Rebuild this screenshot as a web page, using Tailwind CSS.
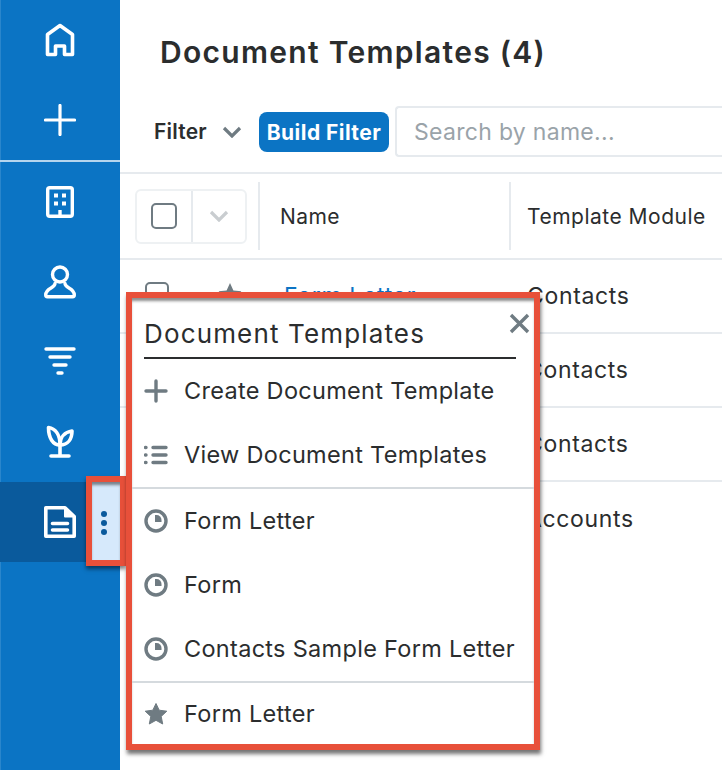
<!DOCTYPE html>
<html>
<head>
<meta charset="utf-8">
<script src="https://cdn.jsdelivr.net/npm/@tailwindcss/browser@4"></script>
</head>
<body class="bg-white">
<div class="relative flex w-[722px] h-[770px] overflow-hidden font-['Inter',sans-serif] text-[#2b2d2e]">
  <!-- Sidebar -->
  <nav class="w-[120px] h-full shrink-0 bg-[#0b74c4] border-l border-[#2a86cc] flex flex-col text-white">
    <div class="h-[80px] flex items-center justify-center -ml-px">
      <svg width="30" height="34" viewBox="0 0 30 34" fill="none" stroke="white" stroke-width="3.6" stroke-linejoin="round"><path d="M15 2.5 L27.5 11.5 V31.5 H19.5 V23 H10.5 V31.5 H2.5 V11.5 Z"/></svg>
    </div>
    <div class="h-[80px] flex items-center justify-center -ml-px">
      <svg width="32" height="32" viewBox="0 0 32 32" fill="none" stroke="white" stroke-width="3.2" stroke-linecap="round"><path d="M16 1.5 V30.5 M1.5 16 H30.5"/></svg>
    </div>
    <div class="h-[2px] bg-[#b5d5ee] -ml-px"></div>
    <div class="h-[80px] flex items-center justify-center -ml-px">
      <svg width="28" height="32" viewBox="0 0 28 32" fill="none" stroke="white" stroke-width="3.4" stroke-linejoin="round"><rect x="1.7" y="1.7" width="24.6" height="28.6" rx="2"/><path d="M14 31 V24" /><g fill="white" stroke="none"><rect x="8" y="7.5" width="4" height="4"/><rect x="16" y="7.5" width="4" height="4"/><rect x="8" y="15.5" width="4" height="4"/><rect x="16" y="15.5" width="4" height="4"/></g></svg>
    </div>
    <div class="h-[80px] flex items-center justify-center -ml-px">
      <svg width="32" height="34" viewBox="0 0 32 34" fill="none" stroke="white" stroke-width="3.4" stroke-linejoin="round" stroke-linecap="round"><circle cx="16" cy="9.5" r="7.5"/><path d="M11 18.5 C11 23.5 1.7 22.5 1.7 30 Q1.7 31.7 3.4 31.7 H28.6 Q30.3 31.7 30.3 30 C30.3 22.5 21 23.5 21 18.5"/></svg>
    </div>
    <div class="h-[80px] flex items-center justify-center -ml-px">
      <svg class="-mt-[3px]" width="32" height="28" viewBox="0 0 32 28" fill="none" stroke="white" stroke-width="3.4" stroke-linecap="round"><path d="M2 2 H30 M6 10 H26 M10 18 H22 M14 26 H18"/></svg>
    </div>
    <div class="h-[80px] flex items-center justify-center -ml-px">
      <svg class="-mt-[3px]" width="28" height="34" viewBox="0 0 28 34" fill="none" stroke="white" stroke-width="3.6" stroke-linecap="round" stroke-linejoin="round"><path d="M14 21 V32 M5 32 H23"/><path d="M14 21 C7 21 2.5 14 2.5 3.5 C9 4.5 14 10 14 21 Z"/><path d="M14 21 C14 13 19 8 26 7 C26 15 22 21 14 21 Z"/></svg>
    </div>
    <div class="h-[80px] bg-[#0a5a9c] flex items-center justify-center -ml-px">
      <svg width="32" height="32" viewBox="0 0 32 32" fill="none" stroke="white" stroke-width="3.6" stroke-linejoin="round" stroke-linecap="round"><path d="M1.8 1.8 H21 L30.2 10.5 V30.2 H1.8 Z"/><path d="M21 2 V10.5 H30 Z" fill="white" stroke-width="2"/><path d="M8.5 17.5 H23.5 M8.5 24 H23.5" stroke-width="3.6"/></svg>
    </div>
  </nav>

  <!-- Main -->
  <main class="flex-1 min-w-0 flex flex-col">
    <h1 class="h-[106px] shrink-0 pl-[40px] pt-[33px] text-[30px] tracking-[1.3px] leading-[38px] font-semibold whitespace-nowrap">Document Templates (4)</h1>
    <div class="h-[68px] shrink-0 flex items-start gap-[6px] pl-[34px] border-b-2 border-[#e6eaee]">
      <div class="w-[99px] h-[51px] flex items-center gap-[15px] shrink-0">
        <span class="text-[21px] tracking-[0.2px] font-semibold">Filter</span>
        <svg width="20" height="12" viewBox="0 0 20 12" fill="none" stroke="#6f7b82" stroke-width="3.2"><path d="M2 2 L10 10 L18 2"/></svg>
      </div>
      <button class="mt-[6px] w-[130px] h-[40px] pt-[1px] rounded-[8px] bg-[#0b74c4] text-white text-[21px] tracking-[0.45px] font-bold shrink-0 flex items-center justify-center">Build Filter</button>
      <div class="flex-1 h-[51px] border-2 border-r-0 border-[#e6eaee] rounded-l-[4px] flex items-center pl-[17px] pt-[2px] text-[23px] tracking-[0.3px] text-[#9aa3a9] whitespace-nowrap">Search by name...</div>
    </div>
    <div class="h-[86px] shrink-0 flex items-center border-b-2 border-[#e6eaee]">
      <div class="ml-[15px] w-[112px] h-[55px] border-2 border-[#eef1f3] rounded-[6px] flex shrink-0">
        <div class="w-[56px] border-r-2 border-[#e6eaee] flex items-center justify-center">
          <div class="w-[26px] h-[26px] border-2 border-[#6f7b82] rounded-[5px]"></div>
        </div>
        <div class="flex-1 flex items-center justify-center">
          <svg width="20" height="12" viewBox="0 0 20 12" fill="none" stroke="#c9cdd0" stroke-width="3.2"><path d="M2 2 L10 10 L18 2"/></svg>
        </div>
      </div>
      <div class="ml-[11px] w-[251px] h-[68px] border-l-2 border-[#e6eaee] pl-[20px] pt-[2px] flex items-center text-[21px] tracking-[0.4px] shrink-0">Name</div>
      <div class="h-[68px] border-l-2 border-[#e6eaee] pl-[16px] pt-[2px] flex items-center text-[21px] tracking-[0.5px] whitespace-nowrap">Template Module</div>
    </div>
    <div class="h-[74px] shrink-0 flex items-center pt-[1px] border-b-2 border-[#e6eaee] text-[23px] tracking-[0.65px]">
      <div class="ml-[25px] -mt-[5px] w-[24px] h-[24px] border-2 border-[#6f7b82] rounded-[5px] shrink-0"></div>
      <svg class="ml-[49px] -mt-[5px] shrink-0" width="24" height="24" viewBox="0 0 24 24" fill="#6f7b82"><path d="M12 1 L15.4 8.4 L23.4 9.3 L17.5 14.8 L19.1 22.8 L12 18.8 L4.9 22.8 L6.5 14.8 L0.6 9.3 L8.6 8.4 Z"/></svg>
      <span class="ml-[42px] w-[243px] text-[#0b74c4] shrink-0">Form Letter</span>
      <span>Contacts</span>
    </div>
    <div class="h-[74px] shrink-0 flex items-center pt-[1px] border-b-2 border-[#e6eaee] pl-[406px] text-[23px] tracking-[0.65px]">Contacts</div>
    <div class="h-[74px] shrink-0 flex items-center pt-[1px] border-b-2 border-[#e6eaee] pl-[406px] text-[23px] tracking-[0.65px]">Contacts</div>
    <div class="h-[74px] shrink-0 flex items-center pl-[406px] text-[23px] tracking-[0.65px]">Accounts</div>
  </main>

  <!-- Kebab highlight -->
  <div class="absolute left-[86px] top-[476px] w-[40px] h-[90px] border-[6px] border-[#e8503a] bg-[#d6e9fb] flex flex-col items-center justify-center gap-[3px] pr-[4px] pt-[4px] shadow-[inset_0_4px_3px_-1px_rgba(0,0,0,0.45),0_3px_4px_rgba(0,0,0,0.5)]">
    <span class="w-[6px] h-[6px] rounded-full bg-[#0a5a9c]"></span>
    <span class="w-[6px] h-[6px] rounded-full bg-[#0a5a9c]"></span>
    <span class="w-[6px] h-[6px] rounded-full bg-[#0a5a9c]"></span>
  </div>

  <!-- Popup -->
  <div class="absolute left-[126px] top-[292px] w-[414px] h-[458px] border-[6px] border-[#e8503a] bg-white flex flex-col text-[23.5px] tracking-[0.3px] shadow-[inset_0_4px_3px_-1px_rgba(0,0,0,0.45),1px_4px_4px_rgba(0,0,0,0.55)]">
    <div class="relative shrink-0 ml-[12px] mr-[18px] h-[61px] border-b-2 border-[#2b2d2e] flex items-end pb-[6px]">
      <span class="text-[26px] tracking-[1.15px] leading-[34px] whitespace-nowrap">Document Templates</span>
      <svg class="absolute right-[-14px] top-[15px]" width="21" height="21" viewBox="0 0 21 21" fill="none" stroke="#6f7b82" stroke-width="3.4"><path d="M2 2 L19 19 M19 2 L2 19"/></svg>
    </div>
    <div class="h-[64px] shrink-0 flex items-center">
      <span class="w-[52px] pl-[12px] flex shrink-0"><svg width="24" height="24" viewBox="0 0 24 24" fill="none" stroke="#6f7b82" stroke-width="3.4" stroke-linecap="round"><path d="M12 2 V22 M2 12 H22"/></svg></span>
      <span class="whitespace-nowrap">Create Document Template</span>
    </div>
    <div class="h-[66px] shrink-0 flex items-center border-b-2 border-[#d5dade]">
      <span class="w-[52px] pl-[12px] flex shrink-0"><svg width="24" height="20" viewBox="0 0 24 20" fill="none" stroke="#6f7b82" stroke-width="3.4" stroke-linecap="round"><path d="M9 2.5 H22 M9 10 H22 M9 17.5 H22"/><path d="M1.5 2.5 H2 M1.5 10 H2 M1.5 17.5 H2"/></svg></span>
      <span class="whitespace-nowrap">View Document Templates</span>
    </div>
    <div class="h-[64px] shrink-0 flex items-center">
      <span class="w-[52px] pl-[12px] flex shrink-0"><svg width="24" height="24" viewBox="0 0 24 24"><circle cx="12" cy="12" r="10" fill="none" stroke="#6f7b82" stroke-width="3.4"/><path d="M11 6 H12.5 A5 5 0 0 1 17.5 11 V13 H11 Z" fill="#6f7b82"/></svg></span>
      <span class="whitespace-nowrap">Form Letter</span>
    </div>
    <div class="h-[64px] shrink-0 flex items-center">
      <span class="w-[52px] pl-[12px] flex shrink-0"><svg width="24" height="24" viewBox="0 0 24 24"><circle cx="12" cy="12" r="10" fill="none" stroke="#6f7b82" stroke-width="3.4"/><path d="M11 6 H12.5 A5 5 0 0 1 17.5 11 V13 H11 Z" fill="#6f7b82"/></svg></span>
      <span class="whitespace-nowrap">Form</span>
    </div>
    <div class="h-[66px] shrink-0 flex items-center border-b-2 border-[#d5dade]">
      <span class="w-[52px] pl-[12px] flex shrink-0"><svg width="24" height="24" viewBox="0 0 24 24"><circle cx="12" cy="12" r="10" fill="none" stroke="#6f7b82" stroke-width="3.4"/><path d="M11 6 H12.5 A5 5 0 0 1 17.5 11 V13 H11 Z" fill="#6f7b82"/></svg></span>
      <span class="whitespace-nowrap">Contacts Sample Form Letter</span>
    </div>
    <div class="h-[61px] shrink-0 flex items-center">
      <span class="w-[52px] pl-[12px] flex shrink-0"><svg width="24" height="24" viewBox="0 0 24 24" fill="#6f7b82" stroke="#6f7b82" stroke-width="1" stroke-linejoin="round"><path d="M12 1.5 L15.2 8.2 L22.8 9.2 L17.2 14.4 L18.7 22 L12 18.3 L5.3 22 L6.8 14.4 L1.2 9.2 L8.8 8.2 Z"/></svg></span>
      <span class="whitespace-nowrap">Form Letter</span>
    </div>
  </div>
</div>
</body>
</html>
